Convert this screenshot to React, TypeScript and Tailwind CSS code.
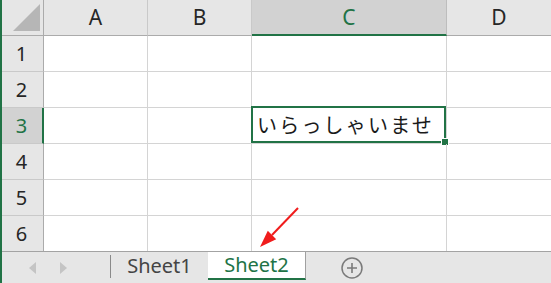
import React from "react";

function ColHead({ label, w, selected, last }: { label: string; w: string; selected?: boolean; last?: boolean }) {
  return (
    <div
      className={
        "flex items-center justify-center h-[36px] text-[21px] " +
        w +
        " " +
        (selected
          ? "bg-[#d2d2d2] border-b-2 border-b-[#217346] text-[#217346] border-r border-r-[#bdbdbd]"
          : "bg-[#e6e6e6] border-b border-b-[#ababab] text-[#262626] " + (last ? "" : "border-r border-r-[#c9c9c9]"))
      }
    >
      <span className={selected ? "mt-[2px]" : ""}>{label}</span>
    </div>
  );
}

function Row({ n, last, children }: { n: number; last?: boolean; children?: React.ReactNode }) {
  const sel = n === 3;
  const rowH = last ? "h-[35px]" : "h-[36px]";
  const bb = last ? "" : "border-b border-b-[#d4d4d4]";
  return (
    <div className={"flex " + rowH}>
      <div
        className={
          "w-[44px] flex items-center justify-center text-[20px] " +
          (last ? "" : "border-b border-b-[#c9c9c9] ") +
          (sel
            ? "bg-[#d2d2d2] border-r-2 border-r-[#217346] text-[#217346]"
            : "bg-[#e6e6e6] border-r border-r-[#ababab] text-[#262626]")
        }
      >
        <span className={sel ? "ml-[1px]" : ""}>{n}</span>
      </div>
      <div className={"w-[104px] border-r border-r-[#d4d4d4] " + bb} />
      <div className={"w-[104px] border-r border-r-[#d4d4d4] " + bb} />
      <div className={"w-[195px] relative border-r border-r-[#d4d4d4] " + bb}>{children}</div>
      <div className={"w-[104px] " + bb} />
    </div>
  );
}

export default function App() {
  return (
    <div
      className="relative w-[551px] h-[283px] bg-white overflow-hidden"
      style={{ fontFamily: '"Noto Sans", "Noto Sans CJK JP", sans-serif' }}
    >
      {/* header */}
      <div className="flex">
        <div className="w-[44px] h-[36px] bg-[#e6e6e6] border-r border-r-[#ababab] border-b border-b-[#ababab]">
          <svg width="43" height="35" viewBox="0 0 43 35">
            <polygon points="40,4 40,31 13,31" fill="#b6b6b6" />
          </svg>
        </div>
        <ColHead label="A" w="w-[104px]" />
        <ColHead label="B" w="w-[104px]" />
        <ColHead label="C" w="w-[195px]" selected />
        <ColHead label="D" w="w-[104px]" last />
      </div>
      <Row n={1} />
      <Row n={2} />
      <Row n={3}>
        <div className="absolute -left-px -top-[2px] right-0 bottom-0 border-2 border-[#217346] flex items-center pl-[4px]">
          <span
            className="text-[20px] tracking-[2.2px] text-[#1a1a1a] leading-none"
            style={{ fontFamily: '"Noto Sans CJK JP", sans-serif' }}
          >
            いらっしゃいませ
          </span>
          <div className="absolute -right-[5px] -bottom-[5px] w-[8px] h-[8px] bg-[#217346] border border-white" />
        </div>
      </Row>
      <Row n={4} />
      <Row n={5} />
      <Row n={6} last />
      {/* tab bar */}
      <div className="flex items-start h-[32px] bg-[#e6e6e6] border-t border-t-[#a3a3a3]">
        <div className="w-[110px] h-[31px] flex items-center pl-[29px]">
          <svg width="7" height="12" viewBox="0 0 7 12">
            <polygon points="7,0 7,12 0,6" fill="#c4c4c4" />
          </svg>
          <svg width="7" height="12" viewBox="0 0 7 12" className="ml-[24px]">
            <polygon points="0,0 0,12 7,6" fill="#c4c4c4" />
          </svg>
        </div>
        <div className="w-px h-[23px] mt-[3px] bg-[#8a8a8a]" />
        <div className="w-[97px] h-[28px] flex items-center justify-center text-[20px] text-[#444]">
          Sheet1
        </div>
        <div className="w-[98px] h-[28px] bg-white border-r border-r-[#a0a0a0] border-b-2 border-b-[#217346] flex items-center justify-center text-[20px] text-[#217346]">
          Sheet2
        </div>
        <div className="ml-[35px] h-[31px] flex items-center">
          <svg width="22" height="22" viewBox="0 0 22 22">
            <circle cx="11" cy="11" r="10" fill="none" stroke="#7a7a7a" strokeWidth="1.5" />
            <path d="M11 6v10M6 11h10" stroke="#7a7a7a" strokeWidth="1.6" />
          </svg>
        </div>
      </div>
      {/* left window edge */}
      <div className="absolute left-0 top-0 bottom-0 w-[2px] bg-[#217346]" />
      {/* red annotation arrow */}
      <svg className="absolute left-0 top-0 pointer-events-none" width="551" height="283" viewBox="0 0 551 283">
        <line x1="298" y1="208" x2="272" y2="235" stroke="#f01c1c" strokeWidth="2" />
        <polygon points="260,247 276.2,239.2 267.8,230.8" fill="#f01c1c" />
      </svg>
    </div>
  );
}
